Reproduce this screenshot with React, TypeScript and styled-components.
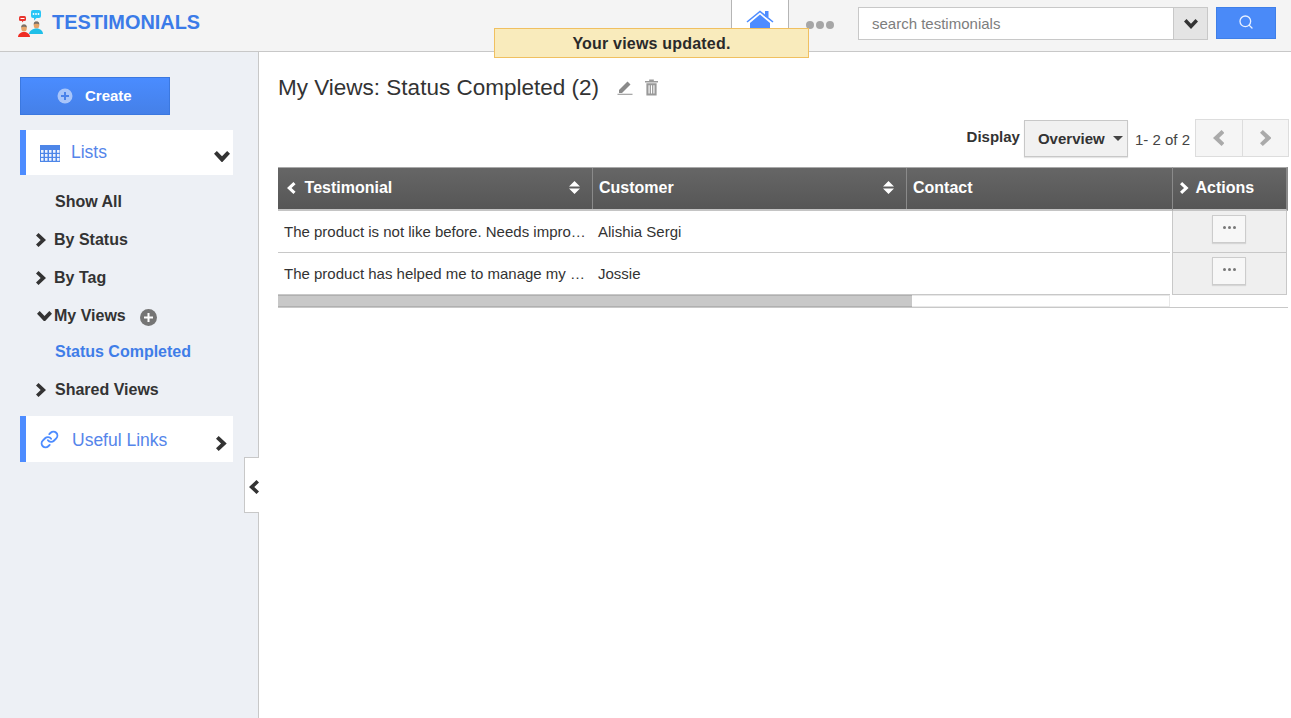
import React from "react";
import styled, { createGlobalStyle } from "styled-components";
import { Link, Search } from "lucide-react";

const GlobalStyle = createGlobalStyle`
  html, body {
    margin: 0;
    padding: 0;
    height: 100%;
    overflow: hidden;
    background: #fff;
    font-family: "Liberation Sans", Arial, sans-serif;
    color: #333;
  }
`;

const Page = styled.div`
  position: relative;
  width: 1291px;
  height: 718px;
  display: flex;
  flex-direction: column;
  overflow: hidden;
`;

const Header = styled.header`
  height: 52px;
  box-sizing: border-box;
  flex: none;
  display: flex;
  align-items: flex-start;
  background: #f4f4f4;
  border-bottom: 1px solid #c8c8c8;
`;

const Brand = styled.div`
  display: flex;
  align-items: center;
  gap: 8px;
  padding: 8px 0 0 16px;
  flex: 1;
  color: #3b7be8;
  font-size: 19.9px;
  font-weight: bold;
  height: 28px;
`;

const LogoSvg = styled.svg`
  margin-top: 4px;
  flex: none;
`;

const HomeTab = styled.div`
  width: 58px;
  height: 51px;
  background: #fff;
  border-left: 1px solid #b5b5b5;
  border-right: 1px solid #b5b5b5;
  display: flex;
  justify-content: center;
  padding-top: 10px;
  box-sizing: border-box;
`;

const MoreDots = styled.div`
  width: 69px;
  display: flex;
  justify-content: center;
  gap: 2px;
  padding: 21px 8px 0 0;
  box-sizing: border-box;
`;

const Dot = styled.span`
  width: 8px;
  height: 8px;
  border-radius: 50%;
  background: #a6a6a6;
`;

const SearchBox = styled.div`
  width: 350px;
  height: 33px;
  margin-top: 7px;
  box-sizing: border-box;
  display: flex;
  border: 1px solid #c8c8c8;
  background: #fff;
`;

const SearchText = styled.div`
  flex: 1;
  padding-left: 13px;
  font-size: 15px;
  line-height: 31px;
  color: #7d7d7d;
`;

const SearchToggle = styled.div`
  width: 33px;
  background: #e4e4e4;
  border-left: 1px solid #c8c8c8;
  display: flex;
  align-items: center;
  justify-content: center;
  color: #333;
`;

const SearchButton = styled.div`
  width: 60px;
  height: 32px;
  margin: 7px 15px 0 8px;
  padding-bottom: 2px;
  background: #4a8af8;
  border: 1px solid #3f7fe8;
  box-sizing: border-box;
  display: flex;
  align-items: center;
  justify-content: center;
  color: #e8f0ff;
`;

const Toast = styled.div`
  position: absolute;
  left: 494px;
  top: 28px;
  width: 315px;
  height: 30px;
  box-sizing: border-box;
  background: #f9ebbc;
  border: 1px solid #f0c060;
  text-align: center;
  font-size: 16px;
  letter-spacing: 0.2px;
  font-weight: bold;
  line-height: 30px;
  color: #2a2a2a;
`;

const Body = styled.div`
  flex: 1;
  display: flex;
  min-height: 0;
`;

const Sidebar = styled.aside`
  position: relative;
  width: 259px;
  flex: none;
  box-sizing: border-box;
  background: #edf0f5;
  border-right: 1px solid #c8c8c8;
  padding: 25px 25px 0 20px;
`;

const CreateButton = styled.div`
  width: 150px;
  height: 38px;
  box-sizing: border-box;
  background: linear-gradient(#4a8cff, #4580e8);
  border: 1px solid #3b78e0;
  display: flex;
  align-items: center;
  color: #fff;
  font-size: 15px;
  font-weight: bold;
  padding: 0 0 1px 36px;
  gap: 12px;
`;

const Panel = styled.div<{ $height: number }>`
  height: ${(p) => p.$height}px;
  box-sizing: border-box;
  background: #fff;
  border-left: 6px solid #4d8cff;
  display: flex;
  align-items: center;
  color: #5585ea;
  font-size: 17.5px;
  padding: 0 3px 0 14px;
`;

const PanelLabel = styled.span<{ $gap: number; $drop?: number }>`
  flex: 1;
  margin: ${(p) => p.$drop ?? 0}px 0 0 ${(p) => p.$gap}px;
`;

const ListsPanel = styled(Panel)`
  margin-top: 15px;
`;

const PanelChevron = styled.span<{ $right: number }>`
  display: flex;
  color: #333;
  margin: 8px ${(p) => p.$right}px 0 0;
`;

const NavList = styled.nav`
  padding: 8px 0 7px 14px;
`;

const NavRow = styled.div<{ $active?: boolean; $indent?: boolean }>`
  height: 38px;
  display: flex;
  align-items: center;
  font-size: 16px;
  font-weight: bold;
  color: ${(p) => (p.$active ? "#3f7de8" : "#333")};
  padding-left: ${(p) => (p.$indent ? "21px" : "0")};
  margin-top: ${(p) => (p.$active ? "-2px" : "0")};
`;

const Caret = styled.span<{ $width?: number; $inset?: number }>`
  width: ${(p) => p.$width ?? 20}px;
  flex: none;
  display: flex;
  box-sizing: border-box;
  padding-left: ${(p) => p.$inset ?? 2}px;
  color: #333;
`;

const AddBadge = styled.span`
  width: 17px;
  height: 17px;
  border-radius: 50%;
  background: #757575;
  color: #fff;
  margin-left: 14px;
  margin-top: 3px;
  display: flex;
  align-items: center;
  justify-content: center;
`;

const CollapseHandle = styled.div`
  position: absolute;
  right: -1px;
  top: 405px;
  width: 15px;
  height: 56px;
  box-sizing: border-box;
  background: #fff;
  border: 1px solid #c8c8c8;
  border-right: none;
  display: flex;
  align-items: center;
  padding: 4px 0 0 4px;
  color: #333;
`;

const Main = styled.main`
  flex: 1;
  min-width: 0;
  padding: 22px 3px 0 19px;
`;

const TitleRow = styled.div`
  display: flex;
  align-items: center;
  height: 28px;
`;

const Title = styled.h1`
  margin: 0 18px 0 0;
  font-size: 22.5px;
  font-weight: normal;
  color: #333;
`;

const TitleIcon = styled.span`
  display: flex;
  margin: 0 12px 2px 0;
`;

const DisplayBar = styled.div`
  display: flex;
  justify-content: flex-end;
  align-items: center;
  height: 38px;
  margin: 17px -1px 10px 0;
  font-size: 15px;
`;

const DisplayLabel = styled.span`
  font-weight: bold;
  color: #333;
  margin: 0 4px 3px 0;
`;

const ViewSelect = styled.div`
  width: 104px;
  height: 37px;
  box-sizing: border-box;
  background: #f1f1f1;
  border: 1px solid #c8c8c8;
  box-shadow: 0 1px 1px rgba(0, 0, 0, 0.1);
  display: flex;
  align-items: center;
  padding-left: 13px;
  gap: 8px;
  font-weight: bold;
  color: #333;
`;

const SelectArrow = styled.span`
  border-left: 5px solid transparent;
  border-right: 5px solid transparent;
  border-top: 5px solid #444;
`;

const PageCount = styled.span`
  margin: 2px 6px 0 7px;
  color: #444;
`;

const PagerButton = styled.div`
  width: 47.5px;
  height: 38px;
  box-sizing: border-box;
  background: #f5f5f5;
  border: 1px solid #ddd;
  margin-left: -1px;
  display: flex;
  align-items: center;
  justify-content: center;
  color: #aaa;
`;

const TableWrap = styled.div`
  display: flex;
  width: 1010px;
  border-bottom: 1px solid #c8c8c8;
  height: 141px;
  box-sizing: border-box;
`;

const ScrollPane = styled.div`
  width: 894px;
  flex: none;
`;

const HeadRow = styled.div`
  height: 44px;
  display: grid;
  grid-template-columns: 315px 314px 265px;
  background: linear-gradient(#666, #565656);
  border-top: 1px solid #a9a9a9;
  border-bottom: 2px solid #c4c4c4;
  box-sizing: border-box;
`;

const HeadCell = styled.div<{ $last?: boolean }>`
  display: flex;
  align-items: center;
  padding: 0 6px 2px;
  color: #fff;
  font-size: 16px;
  font-weight: bold;
  border-right: ${(p) => (p.$last ? "none" : "1px solid #8a8a8a")};
  box-sizing: border-box;
`;

const HeadLabel = styled.span`
  flex: 1;
`;

const HeadCaret = styled.span`
  display: flex;
  margin: 0 9px 0 3px;
`;

const SortIcon = styled.svg`
  width: 11px;
  height: 13px;
  margin-right: 6px;
`;

const DataRow = styled.div`
  height: 42px;
  display: grid;
  grid-template-columns: 314px 314px 264px;
  border-bottom: 1px solid #c8c8c8;
  box-sizing: border-box;
  width: 892px;
`;

const DataCell = styled.div`
  padding: 0 6px;
  font-size: 15px;
  line-height: 42px;
  color: #333;
  white-space: nowrap;
`;

const ScrollTrack = styled.div`
  height: 12px;
  width: 892px;
  box-sizing: border-box;
  border: 1px solid #e8e8e8;
  border-left: none;
  background: #fff;
`;

const ScrollThumb = styled.div`
  height: 12px;
  margin-top: -1px;
  background: #c8c8c8;
  border-top: 1px solid #b0b0b0;
  border-bottom: 1px solid #b0b0b0;
  box-sizing: border-box;
`;

const ActionsColumn = styled.div`
  flex: 1;
`;

const ActionsHead = styled.div`
  height: 44px;
  box-sizing: border-box;
  background: linear-gradient(#666, #565656);
  border-left: 1px solid #8a8a8a;
  border-right: 2px solid #8a8a8a;
  border-top: 1px solid #a9a9a9;
  border-bottom: 2px solid #c4c4c4;
  display: flex;
  align-items: center;
  padding: 0 0 2px 7px;
  gap: 7px;
  color: #fff;
  font-size: 16px;
  font-weight: bold;
`;

const ActionCell = styled.div`
  height: 42px;
  box-sizing: border-box;
  margin-right: 1px;
  padding: 4px 1px 0 0;
  background: #efefef;
  border: 1px solid #c8c8c8;
  border-top: none;
  display: flex;
  justify-content: center;
`;

const ActionButton = styled.div`
  width: 34px;
  height: 28px;
  box-sizing: border-box;
  background: #f7f7f7;
  border: 1px solid #ccc;
  box-shadow: 0 1px 1px rgba(0, 0, 0, 0.1);
  display: flex;
  align-items: center;
  justify-content: center;
  gap: 2px;
  padding-bottom: 3px;
`;

const TinyDot = styled.span`
  width: 3px;
  height: 3px;
  border-radius: 50%;
  background: #777;
`;

const Chevron = ({ dir, size }: { dir: "left" | "right" | "down"; size: number }) => {
  if (dir === "down") {
    return (
      <svg width={size} height={(size * 10) / 14} viewBox="0 0 14 10">
        <polygon points="0,2.5 2.5,0 7,4.7 11.5,0 14,2.5 7,10" fill="currentColor" />
      </svg>
    );
  }
  const points = dir === "right" ? "2.5,0 10,7 2.5,14 0,11.5 4.7,7 0,2.5" : "7.5,0 0,7 7.5,14 10,11.5 5.3,7 10,2.5";
  return (
    <svg width={(size * 10) / 14} height={size} viewBox="0 0 10 14">
      <polygon points={points} fill="currentColor" />
    </svg>
  );
};

const Logo = () => (
  <LogoSvg width="28" height="30" viewBox="0 0 28 30">
    <rect x="15" y="1" width="10" height="8" rx="2" fill="#29c5f6" />
    <polygon points="18,8 18,11.5 21.5,8" fill="#29c5f6" />
    <g fill="#fff">
      <circle cx="17.5" cy="5" r="0.9" />
      <circle cx="20" cy="5" r="0.9" />
      <circle cx="22.5" cy="5" r="0.9" />
    </g>
    <rect x="3" y="7" width="7" height="5" rx="1.5" fill="#e8352e" />
    <polygon points="6,11.5 6,13.5 8,11.5" fill="#e8352e" />
    <rect x="4.5" y="9" width="4" height="1" fill="#fff" />
    <ellipse cx="20.5" cy="16" rx="2.8" ry="3.5" fill="#e5a468" />
    <path d="M17.7 15.5c0-2.5 1.3-3 2.8-3s2.8.5 2.8 3c-1-1-4.600-1-5.600 0z" fill="#77706a" />
    <path d="M13 25c0-3 3.500-5.500 7.500-5.500S27 22 27 25z" fill="#1fbfe8" />
    <ellipse cx="8" cy="19" rx="2.8" ry="3.5" fill="#e5a468" />
    <path d="M5.2 18.500c0-2.500 1.300-3 2.800-3s2.800.5 2.800 3c-1-1-4.600-1-5.600 0z" fill="#77706a" />
    <path d="M2 28c0-3 3-5 6-5s6 2 6 5z" fill="#ef2d24" />
  </LogoSvg>
);

const HomeIcon = () => (
  <svg width="28" height="22" viewBox="0 0 28 22">
    <polyline points="1,12 14,1.5 27,12" fill="none" stroke="#4d8cff" strokeWidth="1.6" />
    <rect x="19" y="1" width="3.5" height="6" fill="#4d8cff" />
    <polygon points="4,13 14,4.5 24,13 24,22 4,22" fill="#4d8cff" />
  </svg>
);

const PlusCircle = () => (
  <svg width="16" height="16" viewBox="0 0 16 16">
    <circle cx="8" cy="8" r="7.5" fill="#a8c5fa" />
    <path d="M8 4v8M4 8h8" stroke="#4a82ea" strokeWidth="2" />
  </svg>
);

const CalendarSvg = styled.svg`
  margin-top: 2px;
  flex: none;
`;

const CalendarIcon = () => (
  <CalendarSvg width="20" height="17" viewBox="0 0 20 17">
    <rect width="20" height="17" fill="#4d86e8" />
    <g fill="#eef3fd">
      {[5, 9, 13].map((y) =>
        [1, 5, 9, 13, 17].map((x) => <rect key={`${x}-${y}`} x={x} y={y} width="2.5" height="2.8" />)
      )}
    </g>
  </CalendarSvg>
);

const PencilIcon = () => (
  <svg width="16" height="15" viewBox="0 0 16 15">
    <path d="M2 10 10.5 1.5l3 3L5 13H2z" fill="#8a8a8a" />
    <rect x="0.5" y="13.7" width="15" height="1.3" fill="#a8a8a8" />
  </svg>
);

const TrashIcon = () => (
  <svg width="13" height="17" viewBox="0 0 14 17">
    <path d="M4.5 0h5v1.5h4.500V3.200H0V1.500h4.500z" fill="#999" />
    <path d="M1.500 4h11v13h-11zM3.800 6v9h1.200V6zm2.600 0v9h1.200V6zM9 6v9h1.200V6z" fill="#999" fillRule="evenodd" />
  </svg>
);

const SortArrows = () => (
  <SortIcon viewBox="0 0 11 13">
    <path d="M5.5 0 11 5.5H0zM5.5 13 0 7.5h11z" fill="#fff" />
  </SortIcon>
);

const rows = [
  { text: "The product is not like before. Needs impro…", customer: "Alishia Sergi" },
  { text: "The product has helped me to manage my …", customer: "Jossie" },
];

const App = () => (
  <Page>
    <GlobalStyle />
    <Header>
      <Brand>
        <Logo />
        TESTIMONIALS
      </Brand>
      <HomeTab>
        <HomeIcon />
      </HomeTab>
      <MoreDots>
        <Dot />
        <Dot />
        <Dot />
      </MoreDots>
      <SearchBox>
        <SearchText>search testimonials</SearchText>
        <SearchToggle>
          <Chevron dir="down" size={14} />
        </SearchToggle>
      </SearchBox>
      <SearchButton>
        <Search size={16} strokeWidth={2} />
      </SearchButton>
    </Header>
    <Toast>Your views updated.</Toast>
    <Body>
      <Sidebar>
        <CreateButton>
          <PlusCircle />
          Create
        </CreateButton>
        <ListsPanel $height={45}>
          <CalendarIcon />
          <PanelLabel $gap={11}>Lists</PanelLabel>
          <PanelChevron $right={0}>
            <Chevron dir="down" size={16} />
          </PanelChevron>
        </ListsPanel>
        <NavList>
          <NavRow $indent>Show All</NavRow>
          <NavRow>
            <Caret>
              <Chevron dir="right" size={14} />
            </Caret>
            By Status
          </NavRow>
          <NavRow>
            <Caret>
              <Chevron dir="right" size={14} />
            </Caret>
            By Tag
          </NavRow>
          <NavRow>
            <Caret $inset={3}>
              <Chevron dir="down" size={15} />
            </Caret>
            My Views
            <AddBadge>
              <svg width="11" height="11" viewBox="0 0 11 11">
                <path d="M5.5 1v9M1 5.5h9" stroke="#fff" strokeWidth="2" />
              </svg>
            </AddBadge>
          </NavRow>
          <NavRow $active $indent>
            Status Completed
          </NavRow>
          <NavRow>
            <Caret $width={21}>
              <Chevron dir="right" size={14} />
            </Caret>
            Shared Views
          </NavRow>
        </NavList>
        <Panel $height={46}>
          <Link size={19} color="#4d8cff" strokeWidth={2.4} />
          <PanelLabel $gap={13} $drop={2}>
            Useful Links
          </PanelLabel>
          <PanelChevron $right={3}>
            <Chevron dir="right" size={15} />
          </PanelChevron>
        </Panel>
        <CollapseHandle>
          <Chevron dir="left" size={14} />
        </CollapseHandle>
      </Sidebar>
      <Main>
        <TitleRow>
          <Title>My Views: Status Completed (2)</Title>
          <TitleIcon>
            <PencilIcon />
          </TitleIcon>
          <TitleIcon>
            <TrashIcon />
          </TitleIcon>
        </TitleRow>
        <DisplayBar>
          <DisplayLabel>Display</DisplayLabel>
          <ViewSelect>
            Overview
            <SelectArrow />
          </ViewSelect>
          <PageCount>1- 2 of 2</PageCount>
          <PagerButton>
            <Chevron dir="left" size={16} />
          </PagerButton>
          <PagerButton>
            <Chevron dir="right" size={16} />
          </PagerButton>
        </DisplayBar>
        <TableWrap>
          <ScrollPane>
            <HeadRow>
              <HeadCell>
                <HeadCaret>
                  <Chevron dir="left" size={12} />
                </HeadCaret>
                <HeadLabel>Testimonial</HeadLabel>
                <SortArrows />
              </HeadCell>
              <HeadCell>
                <HeadLabel>Customer</HeadLabel>
                <SortArrows />
              </HeadCell>
              <HeadCell $last>
                <HeadLabel>Contact</HeadLabel>
              </HeadCell>
            </HeadRow>
            {rows.map((row) => (
              <DataRow key={row.customer}>
                <DataCell>{row.text}</DataCell>
                <DataCell>{row.customer}</DataCell>
                <DataCell />
              </DataRow>
            ))}
            <ScrollTrack>
              <ScrollThumb style={{ width: `${(634 / 891) * 100}%` }} />
            </ScrollTrack>
          </ScrollPane>
          <ActionsColumn>
            <ActionsHead>
              <Chevron dir="right" size={12} />
              Actions
            </ActionsHead>
            {rows.map((row) => (
              <ActionCell key={row.customer}>
                <ActionButton>
                  <TinyDot />
                  <TinyDot />
                  <TinyDot />
                </ActionButton>
              </ActionCell>
            ))}
          </ActionsColumn>
        </TableWrap>
      </Main>
    </Body>
  </Page>
);

export default App;
